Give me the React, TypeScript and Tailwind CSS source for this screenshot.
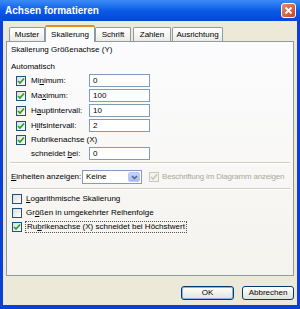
import React from 'react';

const font = { fontFamily: '"Liberation Sans", Arial, sans-serif' };

function Check({ checked, disabled }: { checked?: boolean; disabled?: boolean }) {
    return (
        <div
            className={`w-[10px] h-[10px] shrink-0 border flex items-center justify-center ${
                disabled ? 'border-[#C9C7BA] bg-[#F4F3EE]' : 'border-[#1C5180] bg-gradient-to-br from-[#DCDCD7] to-white'
            }`}
        >
            {checked && (
                <svg width="8" height="8" viewBox="0 0 8 8">
                    <path d="M1 4 L3 6 L7 1.5" fill="none" stroke={disabled ? '#C9C7BA' : '#21A121'} strokeWidth="1.6" />
                </svg>
            )}
        </div>
    );
}

function Field({ value }: { value: string }) {
    return (
        <div className="w-[61px] h-[13px] border border-[#7F9DB9] bg-white flex items-center px-[3px] text-black">
            {value}
        </div>
    );
}

function Row({ label, value, h = 'h-[15px]' }: { label: React.ReactNode; value: string; h?: string }) {
    return (
        <div className={`flex items-center ${h}`}>
            <div className="w-[10px] ml-[9px] mr-[5px]">
                <Check checked />
            </div>
            <div className="w-[58px] whitespace-nowrap">{label}</div>
            <Field value={value} />
        </div>
    );
}

function Tab({ label, active, w }: { label: string; active?: boolean; w: string }) {
    return (
        <div
            className={`${w} flex items-center justify-center border border-b-0 rounded-t-[2px] whitespace-nowrap ${
                active
                    ? 'h-[17px] bg-[#FCFCFE] border-[#919B9C] border-t-[#E68B2C] border-t-2 -mb-[1px] z-10'
                    : 'h-[14px] bg-gradient-to-b from-white to-[#ECEBE6] border-[#919B9C]'
            }`}
        >
            {label}
        </div>
    );
}

export default function App() {
    return (
        <div className="w-[300px] h-[309px] bg-[#0A3FD8] flex flex-col overflow-hidden text-black text-[8px]" style={font}>
            <div className="h-[21px] shrink-0 bg-gradient-to-b from-[#3B8CF6] via-[#0A5BE6] to-[#0446D6] flex items-center justify-between pl-[5px] pr-[4px]">
                <span className="text-white font-bold text-[10px]">Achsen formatieren</span>
                <div className="w-[15px] h-[15px] rounded-[3px] border border-white bg-gradient-to-br from-[#E88B6A] to-[#C8401C] flex items-center justify-center">
                    <svg width="9" height="9" viewBox="0 0 9 9">
                        <path d="M1.5 1.5 L7.5 7.5 M7.5 1.5 L1.5 7.5" stroke="white" strokeWidth="1.8" />
                    </svg>
                </div>
            </div>
            <div className="flex-1 mx-[3px] mb-[4px] bg-[#ECE9D8] flex flex-col px-[3px]">
                <div className="flex items-end pl-[3px] pt-[4px] h-[20px]">
                    <Tab label="Muster" w="w-[36px]" />
                    <Tab label="Skalierung" w="w-[50px]" active />
                    <Tab label="Schrift" w="w-[36px]" />
                    <div className="w-[2px]" />
                    <Tab label="Zahlen" w="w-[38px]" />
                    <div className="w-[1px]" />
                    <Tab label="Ausrichtung" w="w-[51px]" />
                </div>
                <div className="h-[235px] border border-[#919B9C] bg-gradient-to-b from-[#FCFCFE] to-[#F4F3EE] flex flex-col">
                    <div className="pl-[4px] pt-[2px] h-[14px]">Skalierung Größenachse (Y)</div>
                    <div className="pl-[4px] mt-[4px] h-[13px] flex items-center">Automatisch</div>
                    <Row label={<>Mi<u>n</u>imum:</>} value="0" />
                    <Row label={<>Ma<u>x</u>imum:</>} value="100" />
                    <Row label={<>H<u>a</u>uptintervall:</>} value="10" />
                    <Row label={<>H<u>i</u>lfsintervall:</>} value="2" />
                    <div className="flex items-center h-[14px]">
                        <div className="w-[10px] ml-[9px] mr-[5px]">
                            <Check checked />
                        </div>
                        <div>Rubrikenachse (X)</div>
                    </div>
                    <div className="flex items-center h-[13px]">
                        <div className="w-[58px] ml-[24px] whitespace-nowrap">
                            schneidet <u>b</u>ei:
                        </div>
                        <Field value="0" />
                    </div>
                    <div className="mx-[3px] mt-[2px] h-[2px] border-t border-[#D0D0BF] border-b border-b-white" />
                    <div className="flex items-center h-[14px] mt-[6px] pl-[4px] whitespace-nowrap">
                        <div className="w-[71px] shrink-0">
                            <u>E</u>inheiten anzeigen:
                        </div>
                        <div className="w-[60px] shrink-0 h-[14px] border border-[#7F9DB9] bg-white flex items-center justify-between pl-[3px] pr-[1px]">
                            <span>Keine</span>
                            <div className="w-[12px] h-[10px] rounded-[2px] bg-gradient-to-b from-[#C4D3FB] to-[#A7BCF3] border border-[#B8C9F3] flex items-center justify-center">
                                <svg width="7" height="5" viewBox="0 0 7 5">
                                    <path d="M1 1 L3.5 3.5 L6 1" fill="none" stroke="#4D6185" strokeWidth="1.5" />
                                </svg>
                            </div>
                        </div>
                        <div className="ml-[7px] mr-[3px]">
                            <Check checked disabled />
                        </div>
                        <span className="text-[#ACA899] tracking-[-0.2px]">Beschriftung im Diagramm anzeigen</span>
                    </div>
                    <div className="mx-[3px] mt-[4px] h-[2px] border-t border-[#D0D0BF] border-b border-b-white" />
                    <div className="flex items-center h-[14px] mt-[2px] pl-[5px] gap-[4px]">
                        <Check />
                        <span>
                            <u>L</u>ogarithmische Skalierung
                        </span>
                    </div>
                    <div className="flex items-center h-[14px] pl-[5px] gap-[4px]">
                        <Check />
                        <span>
                            Gr<u>ö</u>ßen in umgekehrter Reihenfolge
                        </span>
                    </div>
                    <div className="flex items-center h-[13px] pl-[5px] gap-[3px]">
                        <Check checked />
                        <span className="border border-dotted border-[#555] px-[1px] leading-[10px]">
                            Ru<u>b</u>rikenachse (X) schneidet bei Höchstwert
                        </span>
                    </div>
                </div>
                <div className="flex justify-end gap-[8px] mt-[10px]">
                    <div className="w-[53px] h-[14px] rounded-[3px] border border-[#003C74] bg-gradient-to-b from-white to-[#E3E3DB] shadow-[inset_0_0_0_1px_#8EB0EE] flex items-center justify-center">
                        OK
                    </div>
                    <div className="w-[52px] h-[14px] rounded-[3px] border border-[#003C74] bg-gradient-to-b from-white to-[#E3E3DB] flex items-center justify-center">
                        Abbrechen
                    </div>
                </div>
            </div>
        </div>
    );
}
